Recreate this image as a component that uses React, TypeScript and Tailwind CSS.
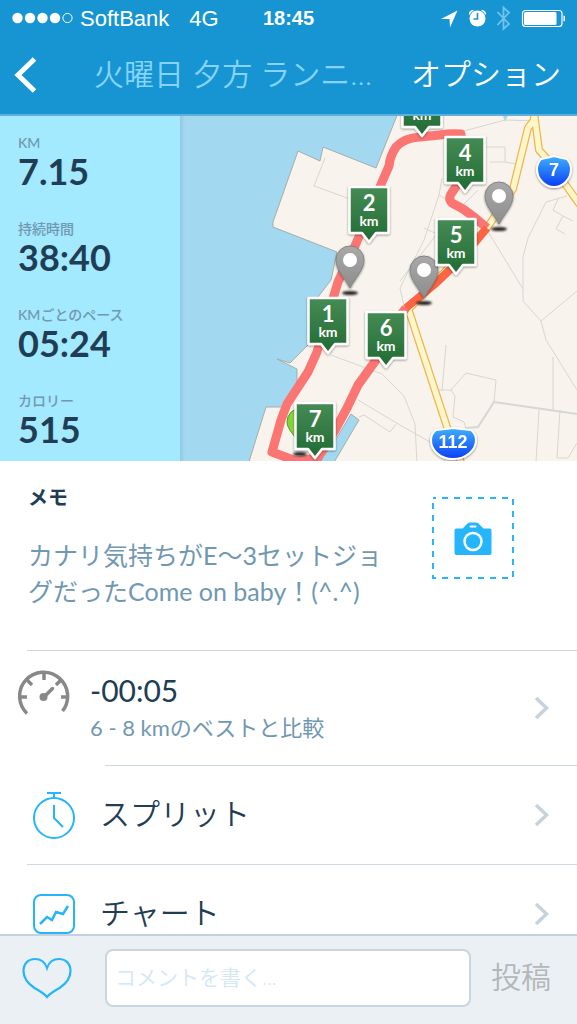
import type { ReactNode } from "react";

const stats = [
  { label: "KM", value: "7.15" },
  { label: "持続時間", value: "38:40" },
  { label: "KMごとのペース", value: "05:24" },
  { label: "カロリー", value: "515" },
];

const StatusBar = () => (
  <div className="flex h-9 items-center justify-between px-3 font-['Liberation_Sans',sans-serif] text-white">
    <div className="flex flex-1 items-center">
      <svg width="62" height="12" viewBox="0 0 62 12" fill="#fff" aria-hidden="true">
        <circle cx="5.5" cy="6" r="5.2" />
        <circle cx="18" cy="6" r="5.2" />
        <circle cx="30.5" cy="6" r="5.2" />
        <circle cx="43" cy="6" r="5.2" />
        <circle cx="55.5" cy="6" r="4.6" fill="none" stroke="#fff" strokeWidth="1" />
      </svg>
      <span className="ml-1.5 text-[22px]">SoftBank</span>
      <span className="ml-5 text-[22px]">4G</span>
    </div>
    <span className="text-xl font-bold">18:45</span>
    <div className="flex flex-1 items-center justify-end">
      <svg width="126" height="28" viewBox="440 4 126 28" aria-hidden="true">
        <path d="M458.500 10.500 442 19h8.500l.5 8.500z" fill="#fff" />
        <circle cx="478.500" cy="18.500" r="8" fill="#fff" />
        <path d="M478.500 13v6h-4" fill="none" stroke="#1795d3" strokeWidth="1.600" />
        <path d="M470.500 14.500q.3-3.500 4-4M486.500 14.500q-.3-3.500-4-4" fill="none" stroke="#fff" strokeWidth="1.500" />
        <path d="m498.500 12 11.500 12-5.500 5V7.500l5.500 5L498.500 25" fill="none" stroke="#74c3ee" strokeWidth="1.800" />
        <rect x="523.500" y="10.500" width="39.500" height="16" rx="3" fill="none" stroke="#fff" strokeWidth="1.200" />
        <rect x="525" y="12" width="32.500" height="13" rx="1.500" fill="#fff" />
        <path d="M564.500 15.500q2 0 2 3t-2 3z" fill="#fff" />
      </svg>
    </div>
  </div>
);

const Header = () => (
  <header className="shrink-0 border-b-2 border-[#5fb0d8] bg-[#1795d3]">
    <StatusBar />
    <div className="flex h-[78px] items-center pr-4 pl-3.5">
      <button type="button" aria-label="戻る" className="flex w-20 shrink-0 items-center">
        <svg width="24" height="38" viewBox="0 0 24 38" fill="none" stroke="#fff" strokeWidth="5">
          <path d="M20.500 3 4 19l16.500 16" />
        </svg>
      </button>
      <h1 className="mr-4 flex-1 truncate pb-1 text-3xl font-[350] text-[#86d4fb]">火曜日 夕方 ランニング</h1>
      <button type="button" className="shrink-0 pb-1 text-3xl font-[350] text-white">
        オプション
      </button>
    </div>
  </header>
);

const kmMarkers = [
  { km: 2, x: 369, y: 244 },
  { km: 1, x: 328, y: 355 },
  { km: 3, x: 422, y: 138 },
  { km: 4, x: 465, y: 194 },
  { km: 5, x: 456, y: 276 },
  { km: 6, x: 386, y: 369 },
  { km: 7, x: 315, y: 460 },
];

const pins = [
  { x: 350, y: 288 },
  { x: 499, y: 224 },
  { x: 424, y: 298 },
];

const Pin = ({ x, y }: { x: number; y: number }) => (
  <g transform={`translate(${x} ${y})`}>
    <ellipse cx="0" cy="5" rx="8" ry="2" fill="#222" filter="url(#soft)" />
    <path
      d="M0 0C-5-10-14-18-14-28a14 14 0 0 1 28 0C14-18 5-10 0 0z"
      fill="url(#pin)"
      stroke="#858585"
      strokeWidth="1"
      filter="url(#shadow)"
    />
    <circle cx="0" cy="-28" r="7" fill="#fff" />
  </g>
);

const KmMarker = ({ km, x, y }: { km: number; x: number; y: number }) => (
  <g transform={`translate(${x} ${y})`} textAnchor="middle" fill="#fff">
    <path
      d="M-19.500-57h39v46H7L0-2l-7-9h-12.500z"
      fill="url(#sign)"
      stroke="#fff"
      strokeWidth="2.500"
      strokeLinejoin="round"
      filter="url(#shadow)"
    />
    <text x="0" y="-33" className="font-['Lato',sans-serif] text-[22px] font-bold">
      {km}
    </text>
    <text x="0" y="-18" className="font-['Lato',sans-serif] text-sm font-bold">
      km
    </text>
  </g>
);

const RouteMap = () => (
  <svg
    className="block h-full w-full"
    viewBox="180 116 397 345"
    preserveAspectRatio="xMinYMin slice"
    role="img"
    aria-label="ルート"
  >
    <defs>
      <linearGradient id="sign" x1="0" y1="0" x2="0" y2="1">
        <stop offset="0" stopColor="#458b55" />
        <stop offset="1" stopColor="#216b33" />
      </linearGradient>
      <linearGradient id="pin" x1="0" y1="0" x2="0" y2="1">
        <stop offset="0" stopColor="#a9a9a9" />
        <stop offset="1" stopColor="#8d8d8d" />
      </linearGradient>
      <linearGradient id="shield" x1="0" y1="0" x2="0" y2="1">
        <stop offset="0" stopColor="#3fb0fb" />
        <stop offset="1" stopColor="#0a3df5" />
      </linearGradient>
      <linearGradient id="edge">
        <stop offset="0" stopColor="#6f9fb4" stopOpacity="0.3" />
        <stop offset="1" stopColor="#6f9fb4" stopOpacity="0" />
      </linearGradient>
      <filter id="soft" x="-50%" y="-100%" width="200%" height="300%">
        <feGaussianBlur stdDeviation="1" />
      </filter>
      <filter id="shadow" x="-20%" y="-20%" width="140%" height="140%">
        <feDropShadow dx="0" dy="1" stdDeviation="1.200" floodOpacity="0.45" />
      </filter>
    </defs>
    <rect x="180" y="114" width="397" height="348" fill="#a2d9f1" />
    <path
      d="M398 113 376 168 323 147 320 161 298 151 273 222V227L337 252 331 280 318 297 308 345 290 363 277 359 297 369V382L283 407H266L248 465H580V113z"
      fill="#f8f4ed"
      stroke="#a9aca8"
      strokeWidth="1"
    />
    <path d="M351 414 359 420 333 464H318L338 436z" fill="#a2d9f1" stroke="#a9aca8" strokeWidth="1" />
    <path d="M502 113h7l-4 9z" fill="#a2d9f1" />
    <g fill="none" stroke="#d5d7d0" strokeWidth="1">
      <path d="M325 158 314 186 350 199 M464 131 505 120 535 121 M484 147H505V162H490M505 162 516 164" />
      <path d="M442 178 439 195 424 240 400 288 405 310 M439 195 460 208 478 190 M424 228 437 234 400 281" />
      <path d="M487 230 523 289V301L541 321 546 340 577 390 M541 321 577 291 M523 289V257L528 238 546 202 567 196" />
      <path d="M558 199 553 210 563 216 556 229 565 234M563 216 573 221" />
      <path d="M331 355 382 374 404 396 415 424 417 464 M358 400 400 425 430 442 M359 417 364 415 390 432 396 424" />
      <path d="M446 345 442 391M437 390H451L466 373 496 380 494 402 M466 428 464 422 453 417 455 396 451 390" />
      <path d="M539 410 536 462M553 357V410M560 410 557 458H568L577 443" />
      <path d="M466 428 478 427 494 402 577 414" strokeWidth="2" />
    </g>
    <path
      d="M405 313 487 228 513 189 528 128 534 120V112M534 112 539 150 548 160 580 205M408 308 447 427 462 465"
      fill="none"
      stroke="#eeb550"
      strokeWidth="8"
      strokeLinejoin="round"
    />
    <path
      d="M405 313 487 228 513 189 528 128 534 120V112M534 112 539 150 548 160 580 205M408 308 447 427 462 465"
      fill="none"
      stroke="#fff7c9"
      strokeWidth="5.500"
      strokeLinejoin="round"
    />
    <path
      d="M487 228 474 217 463 209 452 203Q448 199 451 194L457 185 465 165 461 134Q450 133 440 135L420 137Q404 138 396 147 390 156 389 166L382 182 369 213 355 246 338 282 317 352 308 372 287 404 281 420 272 452 296 461 318 458 334 432 347 408 358 385 376 360 388 330 406 308"
      fill="none"
      stroke="#fb7673"
      strokeWidth="9"
      strokeLinejoin="round"
    />
    <path d="M406 308 435 284 462 258 487 228" fill="none" stroke="#ff6347" strokeWidth="8" strokeLinejoin="round" />
    <path d="M406 308 435 284 462 258 487 228" fill="none" stroke="#f0702c" strokeWidth="1" />
    <ellipse cx="300" cy="454" rx="7" ry="2" fill="#222" filter="url(#soft)" />
    <path d="M300 446C297 437 287 430 287 422a14 14 0 0 1 28 0z" fill="#83d43c" stroke="#5b9734" strokeWidth="1" />
    {pins.map((pin) => (
      <Pin key={pin.x} {...pin} />
    ))}
    {kmMarkers.map((marker) => (
      <KmMarker key={marker.km} {...marker} />
    ))}
    <g
      className="font-['Liberation_Sans',sans-serif] font-bold"
      textAnchor="middle"
      fill="url(#shield)"
      stroke="#fff"
      strokeWidth="2"
      filter="url(#shadow)"
    >
      <path d="M541 159q6-1 13-3 7 2 13 3 4 5 4 10c0 10-8 18-17 18s-17-8-17-18q0-5 4-10z" />
      <path d="M436 430q10-1 17-2 8 1 18 2 5 4 5 10c0 10-10 19-23 19s-22-9-22-19q0-6 5-10z" />
      <text x="554" y="176" fill="#fff" stroke="none" fontSize="18">
        7
      </text>
      <text x="453" y="448" fill="#fff" stroke="none" fontSize="18">
        112
      </text>
    </g>
    <rect x="180" y="114" width="5" height="350" fill="url(#edge)" />
  </svg>
);

const Summary = () => (
  <section className="flex h-[345px]">
    <dl className="flex w-[180px] shrink-0 flex-col bg-[#a3e9ff] pt-[17px] pl-[18px]">
      {stats.map((stat) => (
        <div key={stat.label} className="h-[86px] shrink-0">
          <dt className="text-sm leading-5 font-medium text-[#7198b0]">{stat.label}</dt>
          <dd className="text-4xl leading-9 font-bold text-[#213d54]">{stat.value}</dd>
        </div>
      ))}
    </dl>
    <div className="min-w-0 flex-1">
      <RouteMap />
    </div>
  </section>
);

const Memo = () => (
  <section className="flex h-[189px] items-start gap-12 pt-5 pr-[63px] pl-7">
    <div className="min-w-0 flex-1">
      <h2 className="text-xl leading-8 font-bold text-[#213d54]">メモ</h2>
      <p className="mt-6 text-[25px] leading-9 text-[#6f98b1]">
        カナリ気持ちがE〜3セットジョグだったCome on baby！(^.^)
      </p>
    </div>
    <button type="button" aria-label="写真を追加" className="mt-4 shrink-0">
      <svg width="82" height="82" viewBox="0 0 82 82">
        <rect x="1" y="1" width="80" height="80" fill="none" stroke="#25b5fb" strokeWidth="2" strokeDasharray="6 6" strokeDashoffset="3" />
        <path
          d="M24.500 31.500h6l5-5q1-1 2.500-1h6q1.500 0 2.500 1l5 5h6q2 0 2 2v22.500q0 2-2 2h-33q-2 0-2-2V33.500q0-2 2-2z"
          fill="#25b5fb"
        />
        <rect x="37.500" y="28.500" width="7" height="2" rx="1" fill="#fff" />
        <circle cx="41" cy="44.500" r="8.500" fill="none" stroke="#fff" strokeWidth="2.500" />
      </svg>
    </button>
  </section>
);

const Chevron = () => (
  <svg className="mr-[26px] shrink-0" width="18" height="26" viewBox="0 0 18 26" fill="none" stroke="#c6d2dc" strokeWidth="3.500" aria-hidden="true">
    <path d="m3 3 10.500 10L3 23" />
  </svg>
);

const Row = ({ icon, children }: { icon: ReactNode; children: ReactNode }) => (
  <a href="#" className="flex h-[98px] items-center pl-8">
    {icon}
    <span className="ml-6 flex-1 pb-1 text-3xl font-[350] text-[#213d54]">{children}</span>
    <Chevron />
  </a>
);

const GaugeIcon = () => (
  <svg className="shrink-0" width="52" height="46" viewBox="0 0 52 46" fill="none" stroke="#888" strokeWidth="3.500" aria-hidden="true">
    <path d="M9 43.500A24 24 0 1 1 44.500 41" />
    <path d="M26 3v7M2 27h7M43 27h7M9 10l5 5M43 10l-5 5" />
    <path d="m26 27 8.500-8.500" strokeLinecap="round" />
    <circle cx="25.500" cy="27" r="4" fill="#888" stroke="none" />
  </svg>
);

const StopwatchIcon = () => (
  <svg className="shrink-0" width="44" height="48" viewBox="0 0 44 48" fill="none" stroke="#25b5fb" strokeWidth="2" aria-hidden="true">
    <circle cx="22" cy="27" r="20" />
    <path d="M15 2h14M22 2v5M22 14v13l9 9" />
  </svg>
);

const ChartIcon = () => (
  <svg className="shrink-0" width="44" height="42" viewBox="0 0 44 42" fill="none" stroke="#25b5fb" strokeWidth="2" aria-hidden="true">
    <rect x="2" y="2" width="40" height="38" rx="7" />
    <path d="m8 31 7-7 5 3 4-8 7 2 5-8" strokeWidth="2.500" />
  </svg>
);

const CommentBar = () => (
  <form className="flex h-[90px] shrink-0 items-center border-t-2 border-[#c5d1dc] bg-[#ebf0f4] pr-[26px] pb-1 pl-[22px]">
    <button type="button" aria-label="いいね" className="shrink-0">
      <svg width="50" height="42" viewBox="0 0 50 42" fill="none" stroke="#25b5fb" strokeWidth="2.200">
        <path d="M25 11C23 5 19 2 13 2 6 2 1.500 7 1.500 14c0 8 5 13 11 17 5 3 9 5 12.500 9 3.500-4 7.500-6 12.500-9 6-4 11-9 11-17C48.500 7 44 2 37 2c-6 0-10 3-12 9z" />
      </svg>
    </button>
    <input
      type="text"
      aria-label="コメント"
      placeholder="コメントを書く..."
      className="ml-[33px] h-[58px] min-w-0 flex-1 rounded-lg border-2 border-[#c9d5df] bg-white px-2 pb-1 text-[21px] font-[350] text-[#213d54] placeholder:text-[#d3e7f6]"
    />
    <button type="button" className="ml-5 shrink-0 pb-1 text-3xl font-[350] text-[#b3b7b9]">
      投稿
    </button>
  </form>
);

export default function App() {
  return (
    <div className="flex h-screen flex-col bg-white font-['Lato','Noto_Sans_CJK_JP',sans-serif]">
      <Header />
      <main className="min-h-0 flex-1 overflow-y-auto [scrollbar-width:none]">
        <Summary />
        <Memo />
        <hr className="ml-[27px] border-[#cdd8e1]" />
        <a href="#" className="flex h-[114px] items-center pl-[18px]">
          <div className="flex flex-1 items-start">
            <GaugeIcon />
            <div className="ml-5">
              <div className="text-3xl leading-10 text-[#213d54]">-00:05</div>
              <div className="text-[22px] leading-9 text-[#6f98b1]">6 - 8 kmのベストと比較</div>
            </div>
          </div>
          <Chevron />
        </a>
        <hr className="ml-[105px] border-[#cdd8e1]" />
        <Row icon={<StopwatchIcon />}>スプリット</Row>
        <hr className="ml-[27px] border-[#cdd8e1]" />
        <Row icon={<ChartIcon />}>チャート</Row>
      </main>
      <CommentBar />
    </div>
  );
}
